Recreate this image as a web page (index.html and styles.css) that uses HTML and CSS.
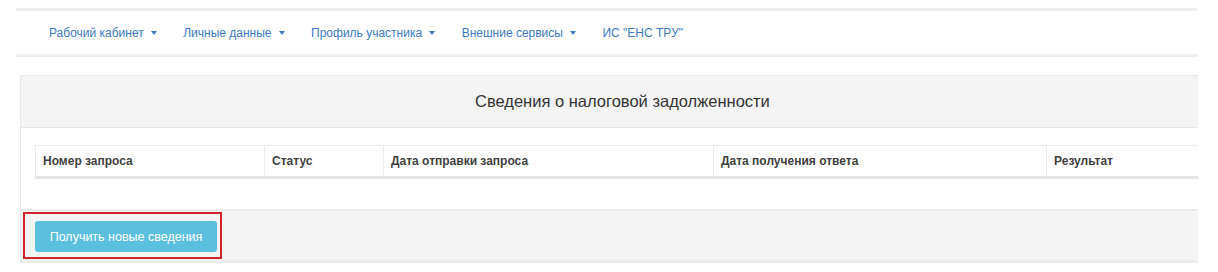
FILE: index.html
```html
<!DOCTYPE html>
<html lang="ru">
<head>
<meta charset="utf-8">
<link rel="stylesheet" href="styles.css">
</head>
<body>
<div class="page">
  <nav class="navbar">
    <ul class="nav">
      <li class="nav-item">Рабочий кабинет <span class="caret"></span></li>
      <li class="nav-item">Личные данные <span class="caret"></span></li>
      <li class="nav-item">Профиль участника <span class="caret"></span></li>
      <li class="nav-item">Внешние сервисы <span class="caret"></span></li>
      <li class="nav-item">ИС "ЕНС ТРУ"</li>
    </ul>
  </nav>
  <section class="panel">
    <div class="panel-heading">Сведения о налоговой задолженности</div>
    <div class="panel-body">
      <table class="table">
        <colgroup>
          <col class="c1">
          <col class="c2">
          <col class="c3">
          <col class="c4">
          <col class="c5">
        </colgroup>
        <thead>
          <tr>
            <th>Номер запроса</th>
            <th>Статус</th>
            <th>Дата отправки запроса</th>
            <th>Дата получения ответа</th>
            <th>Результат</th>
          </tr>
        </thead>
      </table>
    </div>
    <div class="panel-footer">
      <div class="highlight">
        <button class="btn-info" type="button">Получить новые сведения</button>
      </div>
    </div>
  </section>
</div>
</body>
</html>
```

FILE: styles.css
```css
html, body {
  margin: 0;
  padding: 0;
  background: #ffffff;
}

body {
  font-family: "Liberation Sans", Arial, sans-serif;
  color: #333333;
}

.page {
  width: 1182px;
  margin-left: 16px;
  padding-top: 8px;
  overflow: hidden;
}

.navbar {
  border-top: 3px solid #efefef;
  border-bottom: 3px solid #efefef;
  height: 43px;
  display: flex;
  align-items: center;
}

.nav {
  list-style: none;
  margin: 0;
  padding: 0 0 0 33px;
  display: flex;
  gap: 26.5px;
}

.nav-item {
  font-size: 12px;
  color: #3d79c2;
  display: flex;
  align-items: center;
  white-space: nowrap;
}

.caret {
  display: inline-block;
  width: 0;
  height: 0;
  margin-left: 7px;
  border-top: 4px solid #3d79c2;
  border-left: 3.5px solid transparent;
  border-right: 3.5px solid transparent;
}

.panel {
  margin-top: 18px;
  margin-left: 4px;
  width: 1240px;
  border: 1px solid #e9e9e9;
  border-right: none;
  background: #ffffff;
}

.panel-heading {
  background: #f4f4f4;
  border-bottom: 1px solid #e6e6e6;
  height: 51px;
  display: flex;
  align-items: center;
  padding-left: 454px;
  font-size: 16.5px;
  color: #333333;
}

.panel-body {
  padding: 17px 0 31px 14px;
}

.table {
  border-collapse: collapse;
  table-layout: fixed;
  width: 1271px;
  box-shadow: 0 1px 0 #e4e4e4;
}

.c1 { width: 229px; }
.c2 { width: 119px; }
.c3 { width: 330px; }
.c4 { width: 333px; }
.c5 { width: 260px; }

.table th {
  border: 1px solid #ebebeb;
  border-bottom: 2px solid #e6e6e6;
  height: 30px;
  padding: 0 7px;
  text-align: left;
  font-size: 12px;
  font-weight: bold;
  color: #3f3f3f;
  white-space: nowrap;
  overflow: hidden;
}

.panel-footer {
  background: #f4f4f4;
  border-top: 2px solid #eaeaea;
  border-bottom: 2px solid #ececec;
  height: 48px;
  padding: 1px 0 0 2px;
}

.highlight {
  display: inline-block;
  border: 2px solid #d2232a;
  padding: 7px 3px 5px 10px;
  background: #f4f4f4;
}

.btn-info {
  display: block;
  height: 31px;
  width: 182px;
  border: none;
  border-radius: 3px;
  background: #5bc0de;
  color: #ffffff;
  font-family: "Liberation Sans", Arial, sans-serif;
  font-size: 12.5px;
  padding: 0;
  text-align: center;
}
```
